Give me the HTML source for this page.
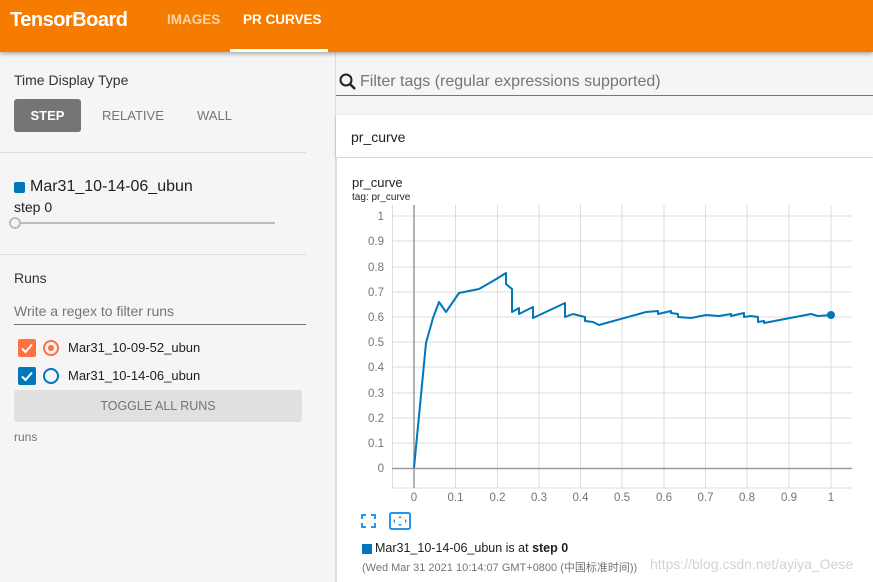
<!DOCTYPE html>
<html><head><meta charset="utf-8"><style>
*{margin:0;padding:0;box-sizing:border-box}
body{width:873px;height:582px;overflow:hidden;background:#f5f5f5;font-family:"Liberation Sans","Noto Sans CJK SC",sans-serif;position:relative;color:#212121}
.hdr{position:absolute;left:0;top:0;width:873px;height:52px;background:#f57c00;box-shadow:0 2px 4px rgba(0,0,0,.3);z-index:2}
.abs{position:absolute;white-space:nowrap}
</style></head><body>
<div class="hdr">
<div class="abs" style="left:10px;top:9px;font-size:20px;font-weight:bold;color:#fff;letter-spacing:-0.5px">TensorBoard</div>
<div class="abs" style="left:167px;top:12px;font-size:13.5px;font-weight:bold;color:#fcd3a8">IMAGES</div>
<div class="abs" style="left:243px;top:12px;font-size:13.5px;font-weight:bold;color:#fff">PR CURVES</div>
<div class="abs" style="left:230px;top:49px;width:98px;height:3px;background:#fff"></div>
</div>
<div class="abs" style="left:335px;top:52px;width:1px;height:530px;background:#ddd"></div>
<div class="abs" style="left:14px;top:72px;font-size:14px;color:#333">Time Display Type</div>
<div class="abs" style="left:14px;top:99px;width:67px;height:33px;background:#757575;border-radius:3px;color:#fff;font-size:13px;font-weight:bold;text-align:center;line-height:33px">STEP</div>
<div class="abs" style="left:102px;top:108px;font-size:13px;color:#757575">RELATIVE</div>
<div class="abs" style="left:197px;top:108px;font-size:13px;color:#757575">WALL</div>
<div class="abs" style="left:0;top:152px;width:306px;height:1px;background:#ddd"></div>
<div class="abs" style="left:14px;top:182px;width:11px;height:11px;background:#0077bb;border-radius:2px"></div>
<div class="abs" style="left:30px;top:178px;font-size:16px;color:#212121">Mar31_10-14-06_ubun</div>
<div class="abs" style="left:14px;top:199px;font-size:14px;color:#212121">step 0</div>
<div class="abs" style="left:20px;top:222px;width:255px;height:2px;background:#bdbdbd"></div>
<div class="abs" style="left:9px;top:217px;width:12px;height:12px;border:2px solid #bdbdbd;border-radius:50%;background:#f5f5f5"></div>
<div class="abs" style="left:0;top:254px;width:306px;height:1px;background:#ddd"></div>
<div class="abs" style="left:14px;top:270px;font-size:14px;color:#333">Runs</div>
<div class="abs" style="left:14px;top:303px;font-size:14px;color:#757575">Write a regex to filter runs</div>
<div class="abs" style="left:14px;top:324px;width:292px;height:1px;background:#757575"></div>
<svg class="abs" style="left:18px;top:339px" width="18" height="18"><rect width="18" height="18" rx="2" fill="#ff7043"/><path d="M4 9.5L7.5 13L14 5.5" fill="none" stroke="#fff" stroke-width="2"/></svg>
<div class="abs" style="left:43px;top:340px;width:16px;height:16px;border:2px solid #ff7043;border-radius:50%"><div style="margin:3px;width:6px;height:6px;background:#ff7043;border-radius:50%"></div></div>
<div class="abs" style="left:68px;top:340px;font-size:13px">Mar31_10-09-52_ubun</div>
<svg class="abs" style="left:18px;top:367px" width="18" height="18"><rect width="18" height="18" rx="2" fill="#0077bb"/><path d="M4 9.5L7.5 13L14 5.5" fill="none" stroke="#fff" stroke-width="2"/></svg>
<div class="abs" style="left:43px;top:368px;width:16px;height:16px;border:2px solid #0077bb;border-radius:50%"></div>
<div class="abs" style="left:68px;top:368px;font-size:13px">Mar31_10-14-06_ubun</div>
<div class="abs" style="left:14px;top:390px;width:288px;height:32px;background:#e0e0e0;border-radius:3px;text-align:center;line-height:32px;font-size:12.5px;color:#757575">TOGGLE ALL RUNS</div>
<div class="abs" style="left:14px;top:430px;font-size:12px;color:#757575">runs</div>

<svg class="abs" style="left:338px;top:72px" width="20" height="20" viewBox="0 0 20 20"><circle cx="8" cy="8" r="5.5" fill="none" stroke="#212121" stroke-width="2"/><path d="M12 12 L17 17" stroke="#212121" stroke-width="2.4"/></svg>
<div class="abs" style="left:360px;top:73px;font-size:16px;color:#757575">Filter tags (regular expressions supported)</div>
<div class="abs" style="left:336px;top:95px;width:537px;height:1px;background:#757575"></div>
<div class="abs" style="left:336px;top:115px;width:537px;height:42px;background:#fff;box-shadow:0 1px 3px rgba(0,0,0,.2)"></div>
<div class="abs" style="left:351px;top:129px;font-size:14px;color:#212121">pr_curve</div>
<div class="abs" style="left:336px;top:158px;width:537px;height:424px;background:#fff;border-left:1px solid #ddd"></div>
<div class="abs" style="left:352px;top:175px;font-size:13px;color:#212121">pr_curve</div>
<div class="abs" style="left:352px;top:192px;font-size:10px;color:#212121">tag: pr_curve</div>
<svg class="abs" style="left:0;top:0" width="873" height="582">
<g stroke="#ddd" stroke-width="1">
<path d="M392 216H852M392 241H852M392 267H852M392 292H852M392 317H852M392 342H852M392 367H852M392 393H852M392 418H852M392 443H852"/>
<path d="M455.5 205V488M497.5 205V488M539 205V488M580.5 205V488M622 205V488M664 205V488M705.5 205V488M747 205V488M789 205V488M831 205V488"/>
<path d="M392.5 205V488M392 488H852"/>
</g>
<path d="M392 468.5H852" stroke="#999" stroke-width="1.5"/>
<path d="M414 205V488" stroke="#999" stroke-width="1.5"/>
<g font-size="11.5" fill="#757575" font-family="Liberation Sans" text-anchor="end">
<text x="384" y="220">1</text><text x="384" y="245">0.9</text><text x="384" y="271">0.8</text><text x="384" y="296">0.7</text><text x="384" y="321">0.6</text><text x="384" y="346">0.5</text><text x="384" y="371">0.4</text><text x="384" y="397">0.3</text><text x="384" y="422">0.2</text><text x="384" y="447">0.1</text><text x="384" y="472">0</text>
</g>
<g font-size="11.5" fill="#757575" font-family="Liberation Sans" text-anchor="middle">
<text x="414" y="501">0</text><text x="455.5" y="501">0.1</text><text x="497.5" y="501">0.2</text><text x="539" y="501">0.3</text><text x="580.5" y="501">0.4</text><text x="622" y="501">0.5</text><text x="664" y="501">0.6</text><text x="705.5" y="501">0.7</text><text x="747" y="501">0.8</text><text x="789" y="501">0.9</text><text x="831" y="501">1</text>
</g>
<path fill="none" stroke="#0077bb" stroke-width="2" stroke-linejoin="round" d="M414 468L426 343L433 318L439 302L446 312L459 293L479 289L493 281L506 273L506 284L512 289L512 312L519 308L519 314L533 307L533 318L565 303L565 317L573 314L585 317L585 321L593 322L599 325L646 312L658 311L658 314L671 311L671 313L678 314L678 317L691 318L706 315L719 316L731 314L731 316L744 313L744 317L751 316L758 317L758 322L764 321L764 323L811 314L818 316L831 315"/>
<circle cx="831" cy="315" r="4" fill="#0077bb"/>
<g fill="none" stroke="#2196f3" stroke-width="2">
<path d="M362 519V515H366M371 515H375V519M375 523V527H371M366 527H362V523"/>
<rect x="390" y="513" width="20" height="16" rx="1.5"/>
</g>
<g fill="#2196f3"><path d="M400 516l-2 2h4zM400 526l-2-2h4zM393 521l2-2v4zM407 521l-2-2v4z"/></g>
</svg>
<div class="abs" style="left:362px;top:544px;width:10px;height:10px;background:#0077bb"></div>
<div class="abs" style="left:375px;top:541px;font-size:12.5px;color:#212121">Mar31_10-14-06_ubun is at <b>step 0</b></div>
<div class="abs" style="left:362px;top:559px;font-size:11px;color:#757575">(Wed Mar 31 2021 10:14:07 GMT+0800 (中国标准时间))</div>
<div class="abs" style="left:650px;top:556px;font-size:14px;color:rgba(180,180,180,.6)">https://blog.csdn.net/ayiya_Oese</div>
</body></html>
